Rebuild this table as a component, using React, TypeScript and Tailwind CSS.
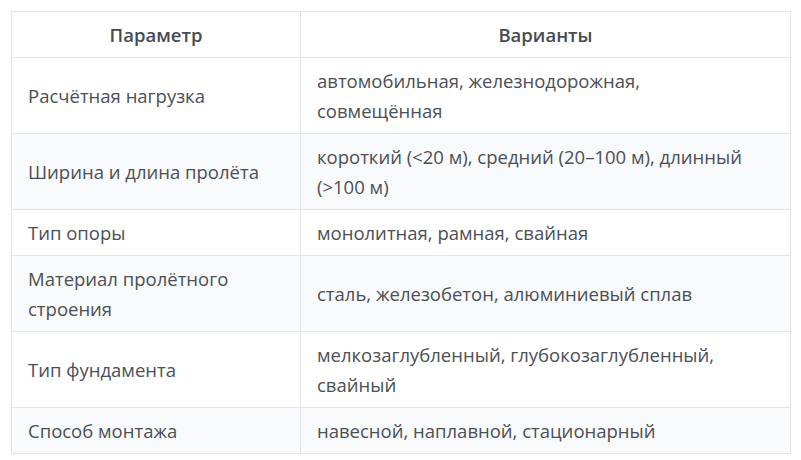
import React from "react";

const rows: [string, string[]][] = [
  ["Расчётная нагрузка", ["автомобильная, железнодорожная,", "совмещённая"]],
  ["Ширина и длина пролёта", ["короткий (<20 м), средний (20–100 м), длинный", "(>100 м)"]],
  ["Тип опоры", ["монолитная, рамная, свайная"]],
  ["Материал пролётного строения", ["сталь, железобетон, алюминиевый сплав"]],
  ["Тип фундамента", ["мелкозаглубленный, глубокозаглубленный,", "свайный"]],
  ["Способ монтажа", ["навесной, наплавной, стационарный"]],
];

export default function App() {
  return (
    <div
      className="bg-white w-[801px] h-[460px] pt-[11px] pl-[11px]"
      style={{ fontFamily: '"Open Sans", "Noto Sans", sans-serif' }}
    >
      <table className="w-[780px] table-fixed border-collapse border border-[#e2e4e8] text-[18.5px] text-[#4b4f56]">
        <colgroup>
          <col className="w-[289px]" />
          <col />
        </colgroup>
        <thead>
          <tr className="bg-white">
            <th className="border border-[#e2e4e8] h-[46px] px-4 font-semibold text-center leading-[29px] text-[#474b52]">
              Параметр
            </th>
            <th className="border border-[#e2e4e8] h-[46px] px-4 font-semibold text-center leading-[29px] text-[#474b52]">
              Варианты
            </th>
          </tr>
        </thead>
        <tbody>
          {rows.map(([a, b], i) => (
            <tr key={a} className={i % 2 === 1 ? "bg-[#f9fafb]" : "bg-white"}>
              <td className="border border-[#e2e4e8] pl-4 pr-6 py-[7.5px] leading-[30px] align-middle">
                {a}
              </td>
              <td className="border border-[#e2e4e8] px-4 py-[7.5px] leading-[30px] align-middle whitespace-nowrap">
                {b.map((line, j) => (
                  <React.Fragment key={j}>
                    {j > 0 && <br />}
                    {line}
                  </React.Fragment>
                ))}
              </td>
            </tr>
          ))}
        </tbody>
      </table>
    </div>
  );
}
